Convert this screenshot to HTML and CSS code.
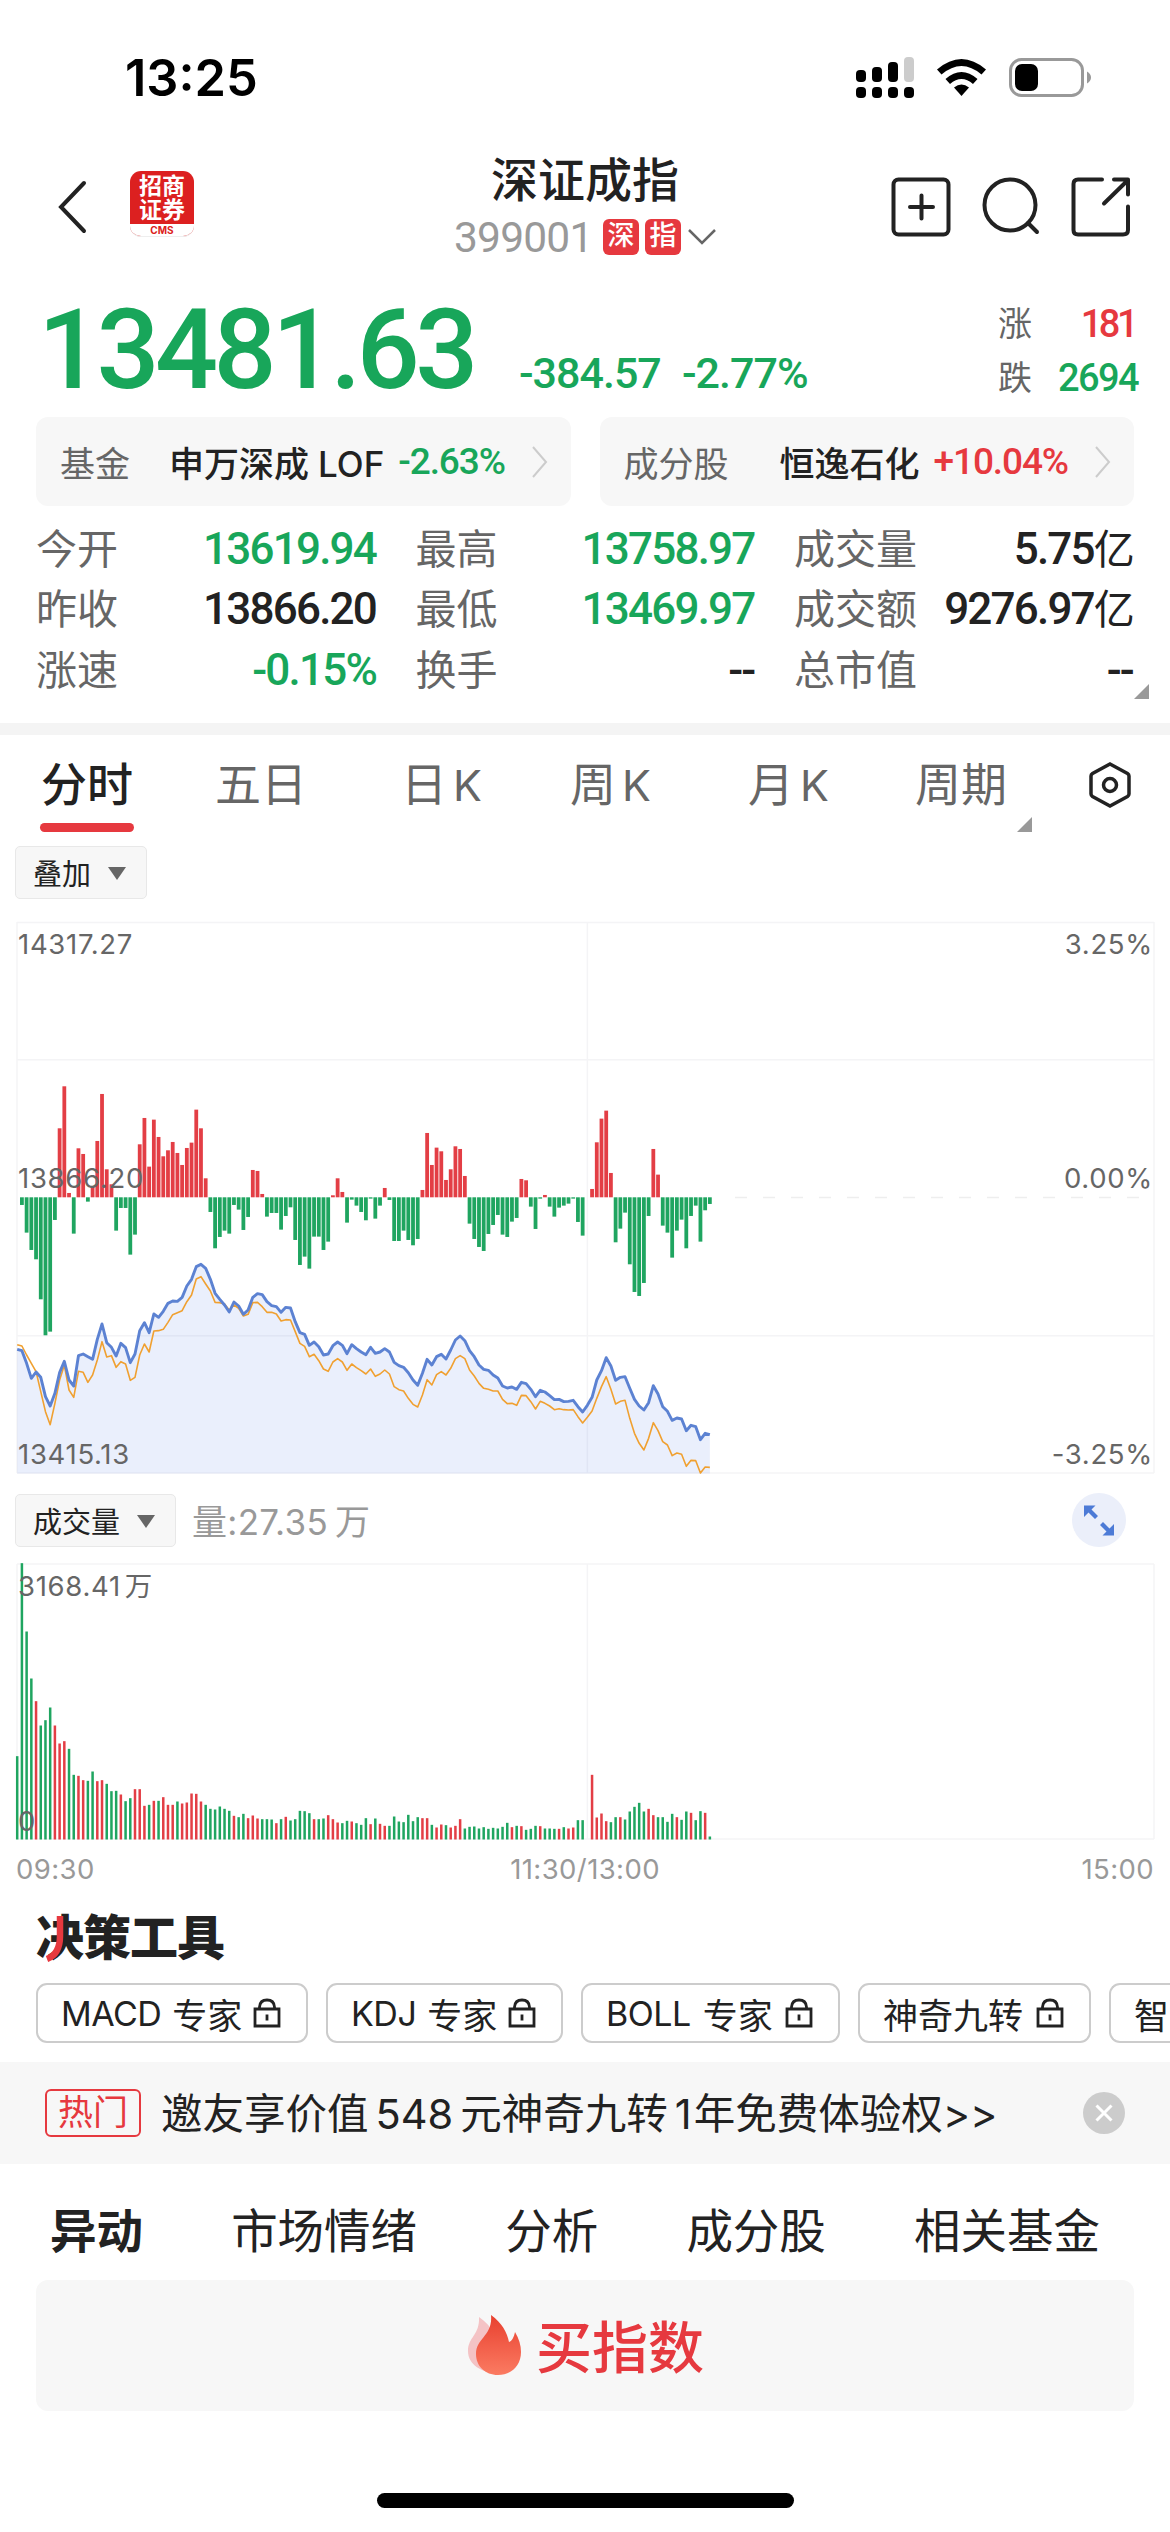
FILE: index.html
```html
<!DOCTYPE html>
<html lang="zh-CN">

<head>
    <meta charset="UTF-8">
    <meta name="viewport" content="width=device-width, initial-scale=1.0">
    <title>深证成指</title>

    <link rel="stylesheet" href="styles.css">
</head>

<body>
    <div class="status">
        <span class="time">13:25</span>
        <svg class="status-icons" width="240" height="44" viewBox="0 0 240 44">
            <rect x="0" y="14" width="10" height="12" rx="4" />
            <rect x="16" y="11" width="10" height="15" rx="4" />
            <rect x="32" y="6" width="10" height="20" rx="4" />
            <rect x="48" y="1" width="10" height="25" rx="4" fill="#ccc" />
            <rect x="0" y="31" width="10" height="11" rx="4" />
            <rect x="16" y="31" width="10" height="11" rx="4" />
            <rect x="32" y="31" width="10" height="11" rx="4" />
            <rect x="48" y="31" width="10" height="11" rx="4" />
            <path d="M81 13.500Q105.500 -7.500 130 13.500L125.500 18.500Q105.500 1.500 85.500 18.500Z" />
            <path d="M89.500 23Q105.500 9 121.500 23L117 28Q105.500 18 94 28Z" />
            <path d="M98 31.500Q105.500 25.500 113 31.500L105.500 40Z" />
            <rect x="154.500" y="3.500" width="72" height="36" rx="11" fill="#fff" stroke="#999" stroke-width="3" />
            <rect x="159" y="8" width="23" height="27" rx="7" />
            <path d="M231 15.500Q235 18 235 21.500T231 27.500Z" fill="#999" />
        </svg>
    </div>

    <div class="header">
        <svg class="back" width="30" height="54" viewBox="0 0 30 54"><path d="M27 3L4 27L27 51" /></svg>
        <div class="logo">
            <div class="logo-text">招商<br>证券</div>
            <div class="logo-cms">CMS</div>
        </div>
        <div class="title">
            <h1>深证成指</h1>
            <div class="code">
                <span class="code-num">399001</span>
                <i>深</i>
                <i>指</i>
                <svg width="30" height="18" viewBox="0 0 30 18"><path d="M2 2L15 15L28 2" /></svg>
            </div>
        </div>
        <svg class="tools" width="240" height="60" viewBox="0 0 240 60">
            <rect x="3.500" y="2.500" width="55" height="55" rx="5" />
            <path d="M20 30H43M31.500 18.500V41.500" />
            <circle cx="120" cy="28" r="25.500" />
            <path d="M138 46L147 55" />
            <path d="M212 2.500H188Q183.500 2.500 183.500 7V53Q183.500 57.500 188 57.500H233Q238 57.500 238 53V29.500M224 2.500H238V17.500M214 26.500L237 4" />
        </svg>
    </div>

    <div class="quote">
        <span class="price green">13481.63</span>
        <span class="diff green">-384.57</span>
        <span class="rate green">-2.77%</span>
        <div class="updown">
            <div><label>涨</label><span class="red up">181</span></div>
            <div><label>跌</label><span class="green">2694</span></div>
        </div>
    </div>

    <div class="related">
        <div class="related-item">
            <label class="fund">基金</label>
            <b>申万深成<em>LOF</em></b>
            <span class="green">-2.63%</span>
            <svg width="16" height="32" viewBox="0 0 16 32"><path d="M1 1L14 16L1 31" /></svg>
        </div>
        <div class="related-item">
            <label class="stock">成分股</label>
            <b>恒逸石化</b>
            <span class="red">+10.04%</span>
            <svg width="16" height="32" viewBox="0 0 16 32"><path d="M1 1L14 16L1 31" /></svg>
        </div>
    </div>

    <div class="stats">
        <div><label>今开</label><span class="green">13619.94</span></div>
        <div><label>最高</label><span class="green">13758.97</span></div>
        <div><label>成交量</label><span>5.75<em>亿</em></span></div>
        <div><label>昨收</label><span>13866.20</span></div>
        <div><label>最低</label><span class="green">13469.97</span></div>
        <div><label>成交额</label><span>9276.97<em>亿</em></span></div>
        <div><label>涨速</label><span class="green">-0.15%</span></div>
        <div><label>换手</label><span>--</span></div>
        <div><label>总市值</label><span>--</span></div>
        <i class="corner"></i>
    </div>

    <div class="periods">
        <a class="active">分时</a>
        <a>五日</a>
        <a>日<em>K</em></a>
        <a>周<em>K</em></a>
        <a>月<em>K</em></a>
        <a>周期<i class="corner"></i></a>
        <svg width="44" height="48" viewBox="0 0 44 48">
            <path d="M22 3L39.500 12.500Q41 13.500 41 15V33Q41 34.500 39.500 35.500L22 45L4.500 35.500Q3 34.500 3 33V15Q3 13.500 4.500 12.500Z" />
            <circle cx="22" cy="24" r="6.500" />
        </svg>
    </div>

    <div class="bar">
        <span class="select">叠加<i class="arrow"></i></span>
    </div>

    <div class="chart price-chart">
        <svg id="priceChart" width="1170" height="556"></svg>
        <span class="lt">14317.27</span>
        <span class="rt">3.25%</span>
        <span class="lm">13866.20</span>
        <span class="rm">0.00%</span>
        <span class="lb">13415.13</span>
        <span class="rb">-3.25%</span>
    </div>

    <div class="bar volume-bar">
        <span class="select">成交量<i class="arrow"></i></span>
        <span class="amount">量:27.35<em>万</em></span>
        <svg class="expand" width="54" height="54" viewBox="0 0 54 54">
            <circle cx="27" cy="27" r="27" fill="#ebeffa" />
            <path d="M12 12.500H23.500L19.500 16.500L26 23L23 26L16.500 19.500L12 24Z" />
            <path d="M42 42.500H30.500L34.500 38.500L28 32L31 29L37.500 35.500L42 31Z" />
        </svg>
    </div>

    <div class="chart volume-chart">
        <svg id="volumeChart" width="1170" height="280"></svg>
        <span class="lt">3168.41<em>万</em></span>
        <span class="lb">0</span>
    </div>
    <div class="axis">
        <span>09:30</span>
        <span class="noon">11:30/13:00</span>
        <span>15:00</span>
    </div>

    <div class="tool-title">
        决策工具
        <svg width="24" height="46" viewBox="0 0 24 46"><path d="M16 0V20Q16 38 3 43" /></svg>
    </div>
    <div class="chips">
        <span class="macd"><em>MACD</em>专家<svg class="lock"><use href="#lock" /></svg></span>
        <span class="kdj"><em>KDJ</em>专家<svg class="lock"><use href="#lock" /></svg></span>
        <span class="boll"><em>BOLL</em>专家<svg class="lock"><use href="#lock" /></svg></span>
        <span class="nine">神奇九转<svg class="lock"><use href="#lock" /></svg></span>
        <span class="last">智</span>
    </div>

    <div class="notice">
        <span class="hot">热门</span>
        <p>邀友享价值<em>548</em>元神奇九转<em class="one">1</em>年免费体验权&gt;&gt;</p>
        <svg width="42" height="42" viewBox="0 0 42 42">
            <circle cx="21" cy="21" r="21" fill="#ccc" />
            <path d="M13.500 13.500L28.500 28.500M28.500 13.500L13.500 28.500" stroke="#fff" stroke-width="3" />
        </svg>
    </div>

    <div class="sections">
        <a class="active">异动</a>
        <a>市场情绪</a>
        <a>分析</a>
        <a>成分股</a>
        <a>相关基金</a>
    </div>

    <div class="buy">
        <svg width="54" height="62" viewBox="0 0 54 62">
            <defs>
                <linearGradient id="fire" x1="0" y1="0" x2="0" y2="1">
                    <stop offset="0" stop-color="#e8402f" />
                    <stop offset="1" stop-color="#fb7b62" />
                </linearGradient>
            </defs>
            <path d="M11 2C25 12 29 22 30 30V58C14 58 0 50 0 36C0 22 12 20 11 2Z" fill="#f2b5b8" opacity=".8" />
            <path d="M23 0C34 8 39 17 41 27C44 26 46 22 47 17C51 24 53 30 53 37C53 51 43 60 30 60C17 60 8 51 8 39C8 23 25 21 23 0Z" fill="url(#fire)" />
        </svg>
        <span>买指数</span>
    </div>

    <div class="home"></div>

    <svg width="0" height="0" class="defs">
        <symbol id="lock" viewBox="0 0 28 30">
            <path d="M2 11H26V28H2ZM6.500 11V9Q7 2 14 2T21.500 9V11M14 16.500V22.500" />
        </symbol>
    </svg>

    <script src="chart.js"></script>
</body>

</html>
```
FILE: styles.css
```css
* {
    margin: 0;
    padding: 0;
    box-sizing: border-box;
}

body {
    width: 1170px;
    height: 2532px;
    overflow: hidden;
    background-color: #fff;
    color: #222;
    font-family: Inter, "Noto Sans CJK SC", sans-serif;
    text-autospace: no-autospace;
}

em,
i {
    font-style: normal;
}

svg {
    display: block;
    flex: none;
}

.green {
    color: #18a65a;
}

.red {
    color: #e6393f;
}

/* 状态栏 */
.status {
    display: flex;
    justify-content: space-between;
    height: 150px;
    padding: 56px 74px 0 125px;
}

.time {
    height: 44px;
    line-height: 44px;
    font-size: 50.500px;
    font-weight: 600;
    color: #000;
}

/* 头部 */
.header {
    display: flex;
    height: 140px;
    padding-left: 57px;
}

.back {
    margin-top: 30px;
    fill: none;
    stroke: #222;
    stroke-width: 4;
    stroke-linecap: round;
}

.logo {
    width: 64px;
    height: 66px;
    margin: 21px 0 0 43px;
    border-radius: 11px;
    overflow: hidden;
    background-color: #dc2020;
    border-bottom: 1px solid #eee;
    text-align: center;
}

.logo-text {
    height: 53px;
    padding-top: 3px;
    font-size: 23px;
    line-height: 24px;
    font-weight: 700;
    color: #fff;
}

.logo-cms {
    height: 13px;
    background-color: #fff;
    font-size: 10px;
    line-height: 12px;
    font-weight: 700;
    color: #dc2020;
}

.title {
    width: 390px;
    margin-left: 196px;
}

.title h1 {
    height: 60px;
    line-height: 60px;
    text-align: center;
    font-size: 47px;
    font-weight: 500;
}

.code {
    display: flex;
    align-items: center;
    height: 54px;
    padding-left: 64px;
}

.code-num {
    width: 149px;
    font-family: Roboto, sans-serif;
    font-size: 42.500px;
    letter-spacing: -.8px;
    color: #999;
}

.code i {
    width: 36px;
    height: 36px;
    margin-right: 6px;
    border-radius: 6px;
    background-color: #e6393f;
    color: #fff;
    font-size: 27px;
    line-height: 34px;
    font-weight: 500;
    text-align: center;
}

.code svg {
    fill: none;
    stroke: #666;
    stroke-width: 2.5;
}

.tools {
    margin: 27px 0 0 110px;
    fill: none;
    stroke: #222;
    stroke-width: 4;
    stroke-linecap: round;
    stroke-linejoin: round;
}

/* 最新价 */
.quote {
    display: flex;
    height: 127px;
    padding: 0 32px 0 36px;
    font-family: Roboto, "Noto Sans CJK SC", sans-serif;
    font-weight: 500;
    white-space: nowrap;
}

.price {
    width: 483px;
    padding-left: 2px;
    font-size: 111px;
    line-height: 120px;
    letter-spacing: -4.6px;
}

.diff,
.rate {
    padding-top: 61px;
    font-size: 43px;
    line-height: 44px;
    letter-spacing: -1px;
}

.diff {
    width: 163px;
}

.updown {
    margin-left: auto;
    padding-top: 7px;
}

.updown div {
    display: flex;
    justify-content: space-between;
    width: 140px;
    height: 54px;
    line-height: 54px;
    font-size: 38px;
    letter-spacing: -1.6px;
}

.updown .up {
    padding-right: 3px;
    letter-spacing: -3.500px;
}

.updown label {
    font-size: 34px;
    font-weight: 400;
    color: #666;
}

/* 相关基金、成分股 */
.related {
    display: flex;
    gap: 29px;
    padding: 0 36px;
}

.related-item {
    display: flex;
    align-items: center;
    width: 535px;
    height: 89px;
    padding: 0 23px 0 24px;
    border-radius: 12px;
    background-color: #f7f7f7;
    font-size: 35px;
    white-space: nowrap;
}

.related-item label {
    color: #666;
}

.related-item .fund {
    width: 109px;
}

.related-item .stock {
    width: 156px;
}

.related-item b {
    font-weight: 500;
}

.related-item em {
    margin-left: 9px;
}

.related-item span {
    margin-left: 14px;
    font-family: Roboto, sans-serif;
    font-weight: 500;
    font-size: 37px;
    letter-spacing: -1.1px;
}

.related-item svg {
    margin-left: auto;
    fill: none;
    stroke: #ccc;
    stroke-width: 2;
}

/* 行情数据 */
.stats {
    position: relative;
    display: grid;
    grid-template-columns: 340px 339px 339px;
    grid-auto-rows: 60.3px;
    column-gap: 39.500px;
    height: 217px;
    padding: 13px 36px 0;
}

.stats div {
    display: flex;
    justify-content: space-between;
    line-height: 60px;
    white-space: nowrap;
}

.stats label {
    font-size: 41px;
    color: #666;
}

.stats span {
    font-family: Roboto, "Noto Sans CJK SC", sans-serif;
    font-size: 44px;
    font-weight: 500;
    letter-spacing: -1.8px;
}

.stats em {
    font-size: 41px;
    font-weight: 400;
}

.corner {
    position: absolute;
    right: 21px;
    bottom: 24px;
    width: 15px;
    height: 15px;
    background-color: #999;
    clip-path: polygon(100% 0, 100% 100%, 0 100%);
}

/* 周期 */
.periods {
    display: grid;
    grid-template-columns: 174px 186px 169px 178px 167px 173px 44px;
    height: 123px;
    padding: 14px 0 0 41px;
    border-top: 12px solid #f4f4f4;
}

.periods a {
    position: relative;
    height: 70px;
    line-height: 70px;
    font-size: 46px;
    color: #666;
}

.periods em {
    margin-left: 6px;
    font-size: 43px;
}

.periods .active {
    font-weight: 500;
    color: #222;
}

.periods .active::after {
    content: "";
    position: absolute;
    left: -1px;
    top: 74px;
    width: 94px;
    height: 9px;
    border-radius: 5px;
    background-color: #e6393f;
}

.periods .corner {
    right: auto;
    left: 102px;
    bottom: -13px;
}

.periods svg {
    margin-top: 12px;
    fill: none;
    stroke: #222;
    stroke-width: 3.5;
}

/* 图表 */
.bar {
    display: flex;
    align-items: center;
    height: 53px;
    padding-left: 15px;
}

.select {
    display: flex;
    align-items: center;
    height: 53px;
    padding: 0 20px 2px 17px;
    border: 1px solid #e8e8e8;
    border-radius: 5px;
    background-color: #f7f7f7;
    font-size: 29px;
}

.arrow {
    width: 18px;
    height: 13px;
    margin: 4px 0 0 17px;
    background-color: #666;
    clip-path: polygon(0 0, 100% 0, 50% 100%);
}

.amount {
    margin: -2px 0 0 16px;
    font-size: 35px;
    letter-spacing: .3px;
    color: #999;
}

.amount em {
    margin-left: 7px;
}

.expand {
    margin: -2px 0 0 auto;
    fill: #4d7bd6;
}

.chart {
    position: relative;
}

.price-chart {
    height: 552px;
    margin-top: 22px;
}

.volume-bar {
    margin-top: 21px;
    padding-right: 44px;
}

.volume-chart {
    height: 277px;
    margin-top: 16px;
}

.chart svg {
    overflow: visible;
}

.chart span {
    position: absolute;
    line-height: 30px;
    font-size: 27.500px;
    letter-spacing: .7px;
    color: #666;
}

.chart em {
    margin-left: 4px;
}

.lt,
.lm,
.lb {
    left: 18px;
}

.rt,
.rm,
.rb {
    right: 17px;
}

.lt,
.rt {
    top: 8px;
}

.lm,
.rm {
    top: 242px;
}

.lb,
.rb {
    bottom: 4px;
}

.axis {
    display: flex;
    justify-content: space-between;
    height: 64px;
    padding: 13px 16px 0 16px;
    font-size: 27.500px;
    line-height: 32px;
    letter-spacing: .4px;
    color: #999;
}

.noon {
    margin-right: 6px;
}

/* 决策工具 */
.tool-title {
    position: relative;
    height: 79px;
    padding-left: 36px;
    font-size: 48px;
    line-height: 67px;
    font-weight: 900;
    letter-spacing: -1px;
}

.tool-title svg {
    position: absolute;
    left: 44px;
    top: 12px;
    fill: none;
    stroke: #e6393f;
    stroke-width: 6.5;
}

.chips {
    display: flex;
    gap: 18px;
    padding-left: 36px;
}

.chips span {
    display: flex;
    flex: none;
    align-items: center;
    justify-content: space-between;
    height: 60px;
    padding: 0 25px 0 23px;
    border: 2px solid #ccc;
    border-radius: 11px;
    font-size: 35px;
    white-space: nowrap;
}

.chips em {
    font-size: 34px;
    letter-spacing: -.5px;
}

.chips .macd {
    width: 272px;
}

.chips .kdj {
    width: 237px;
}

.chips .boll {
    width: 259px;
}

.chips .nine {
    width: 233px;
}

.chips .last {
    flex: 1;
    padding-right: 0;
    border-right: 0;
    border-radius: 11px 0 0 11px;
}

.lock {
    width: 28px;
    height: 30px;
    fill: none;
    stroke: #222;
    stroke-width: 2.8;
}

.notice {
    display: flex;
    align-items: center;
    height: 102px;
    margin-top: 19px;
    padding: 0 45px;
    background-color: #f7f7f7;
}

.hot {
    width: 96px;
    height: 48px;
    border: 2px solid #e6393f;
    border-radius: 6px;
    line-height: 43px;
    font-size: 35px;
    text-align: center;
    color: #e6393f;
}

.notice p {
    margin: -4px 0 0 20px;
    font-size: 41.500px;
    white-space: nowrap;
}

.notice em {
    margin: 0 7px;
}

.notice .one {
    margin-right: 2px;
}

.notice svg {
    margin-left: auto;
}

/* 底部栏目 */
.sections {
    display: flex;
    justify-content: space-between;
    height: 116px;
    padding: 0 70px 0 50px;
    line-height: 135px;
    font-size: 46.500px;
}

.sections .active {
    font-weight: 700;
}

.buy {
    display: flex;
    align-items: center;
    justify-content: center;
    gap: 14px;
    height: 131px;
    margin: 0 36px;
    padding-left: 2px;
    border-radius: 12px;
    background-color: #f7f7f7;
    font-size: 56px;
    font-weight: 500;
    color: #e6393f;
}

.buy span {
    margin-top: -5px;
}

.home {
    width: 417px;
    height: 15px;
    margin: 82px auto 0;
    border-radius: 8px;
    background-color: #000;
}

.defs {
    position: absolute;
}
```
FILE: chart.js
```js
var STEP = 4.712;
var LEFT = 17.2;
var RED = '#e33e45';
var GREEN = '#1fa560';

// 红绿柱，正数在零轴上方
var power = [0, -23, -106, -158, -186, -306, -414, -403, -68, 207, 333, 13, -109, 147, 130, -13, 34, 169, 310, 84,
    39, -100, -32, -32, -172, -112, 159, 238, 92, 233, 181, 123, 141, 166, 133, 97, 148, 164, 263, 207,
    57, -44, -153, -119, -100, -109, -23, -37, -98, -59, 82, 79, 10, -58, -47, -47, -97, -56, -30, -128,
    -203, -178, -214, -118, -118, -158, -133, 6, 57, 16, -76, -7, -25, -44, -69, -4, -64, -25, 28, -8,
    -131, -131, -100, -128, -144, -125, 22, 193, 97, 149, 138, 52, 84, 153, 145, 64, -79, -125, -149, -161,
    -110, -83, -53, -112, -119, -73, -62, 55, 51, -28, -95, -4, 7, -28, -58, -31, -25, -19, -4, -74,
    -115, 0, 25, 165, 236, 260, 73, -135, -94, -46, -201, -284, -296, -257, -56, 145, 68, -85, -106, -181,
    -100, -67, -153, -56, -25, -133, -39, -20];

var index = [898, 902, 940, 985, 966, 982, 1040, 1068, 1030, 968, 934, 990, 1008, 917, 912, 920, 928, 868, 822, 878,
    892, 918, 880, 893, 938, 912, 842, 818, 848, 792, 802, 784, 760, 753, 754, 742, 708, 688, 650, 643,
    655, 688, 730, 748, 765, 786, 756, 768, 793, 780, 742, 731, 734, 755, 767, 770, 787, 772, 774, 815,
    848, 853, 886, 876, 890, 915, 912, 887, 876, 886, 911, 884, 896, 906, 914, 892, 910, 906, 896, 906,
    937, 947, 952, 968, 990, 1006, 970, 928, 945, 920, 913, 927, 900, 870, 858, 872, 902, 920, 945, 958,
    961, 975, 984, 1008, 1014, 1011, 1018, 997, 1001, 1018, 1040, 1021, 1026, 1037, 1049, 1048, 1055, 1054, 1051, 1070,
    1086, 1066, 1042, 990, 962, 923, 948, 991, 982, 980, 1015, 1048, 1068, 1080, 1058, 1007, 1032, 1070, 1084, 1111,
    1104, 1107, 1142, 1126, 1130, 1169, 1150, 1154];

var average = [884, 888, 915, 940, 965, 1025, 1085, 1124, 1060, 990, 946, 1020, 1042, 964, 967, 997, 975, 930, 875, 921,
    917, 952, 935, 942, 991, 982, 915, 882, 906, 843, 842, 838, 817, 794, 788, 782, 755, 735, 687, 680,
    702, 723, 757, 758, 762, 780, 765, 775, 798, 793, 758, 757, 770, 787, 787, 792, 813, 809, 810, 845,
    880, 889, 920, 913, 932, 957, 964, 936, 926, 936, 961, 942, 953, 962, 972, 957, 979, 972, 960, 972,
    1010, 1019, 1023, 1045, 1063, 1071, 1035, 989, 1005, 974, 965, 975, 955, 926, 917, 926, 960, 978, 1000, 1015,
    1018, 1023, 1023, 1048, 1061, 1060, 1066, 1036, 1037, 1055, 1077, 1054, 1060, 1068, 1079, 1076, 1079, 1080, 1079, 1100,
    1119, 1102, 1083, 1045, 1010, 980, 1018, 1062, 1054, 1051, 1105, 1150, 1180, 1200, 1165, 1118, 1142, 1175, 1185, 1217,
    1209, 1213, 1249, 1231, 1232, 1269, 1251, 1252];

// 成交量，负数为红柱
var volume = [250, 829, 624, 483, -415, 342, 358, 396, -342, -288, -295, 272, 194, -191, -178, 176, 204, -175, -178, 167,
    145, 146, -135, 115, 124, -151, -151, -101, 104, -116, 116, -127, -104, -104, 114, -108, -111, -138, -137, -114,
    104, 92, 90, 99, 92, 86, -71, 67, 77, -64, -72, -63, 61, 61, 60, -49, 61, -68, 57, 61,
    86, 85, 79, -61, 61, 63, -73, -61, -51, 49, 56, -54, 49, 44, 64, -46, 63, -47, -41, 41,
    69, 54, 52, 74, 55, 67, -64, -64, 44, -36, -45, 43, -36, -41, -61, 33, 38, 39, 33, 37,
    32, 35, 33, 38, 50, -37, 41, -40, 29, 32, 41, -40, 33, 33, 32, -32, 37, -33, -36, 58,
    58, 0, -194, -66, -78, -55, 52, 67, -67, 60, 84, 98, 110, 84, -92, -73, 67, 67, 53, 77,
    -67, 59, 84, -80, 58, 85, -80, 9];

function x(i) {
    return (LEFT + i * STEP).toFixed(2);
}

function line(x1, y1, x2, y2) {
    return '<path d="M' + x1 + ' ' + y1 + 'L' + x2 + ' ' + y2 + '" stroke="#f4f4f6" stroke-width="1.500"/>';
}

function rect(cx, y, w, h, color) {
    return '<rect x="' + (cx - w / 2).toFixed(2) + '" y="' + y.toFixed(2) + '" width="' + w + '" height="' + h.toFixed(2) + '" fill="' + color + '"/>';
}

function points(list) {
    return list.map(function(v, i) {
        return x(i) + ',' + (v / 3 + 129).toFixed(2);
    }).join(' ');
}

function drawPrice() {
    var html = '';
    var zero = 276.3;
    html += line(17, 1.5, 1154, 1.5) + line(17, 138.7, 1154, 138.7) + line(17, 414.7, 1154, 414.7) + line(17, 552, 1154, 552);
    html += line(17, 1, 17, 552) + line(587.4, 1, 587.4, 552) + line(1154, 1, 1154, 552);
    html += '<polygon points="' + LEFT + ',552.500 ' + points(index) + ' ' + x(147) + ',552.500" fill="#5c82e6" fill-opacity=".13"/>';
    html += '<path d="M735 276.500H1154" stroke="#eee" stroke-width="1.500" stroke-dasharray="12 16"/>';
    power.forEach(function(v, i) {
        var h = Math.abs(v) / 3;
        html += rect(x(i), v > 0 ? zero - h : zero, 3.8, h, v > 0 ? RED : GREEN);
    });
    html += '<polyline points="' + points(average) + '" fill="none" stroke="#f0a030" stroke-width="1.600" stroke-linejoin="round"/>';
    html += '<polyline points="' + points(index) + '" fill="none" stroke="#5c82d2" stroke-width="2.900" stroke-linejoin="round"/>';
    document.querySelector('#priceChart').innerHTML = html;
}

function drawVolume() {
    var html = line(17, 1, 1154, 1) + line(17, 276, 1154, 276);
    html += line(17, 1, 17, 276) + line(587.4, 1, 587.4, 276) + line(1154, 1, 1154, 276);
    volume.forEach(function(v, i) {
        var h = Math.abs(v) / 3;
        html += rect(x(i), 276.5 - h, 2.5, h, v < 0 ? RED : GREEN);
    });
    document.querySelector('#volumeChart').innerHTML = html;
}

drawPrice();
drawVolume();
```
